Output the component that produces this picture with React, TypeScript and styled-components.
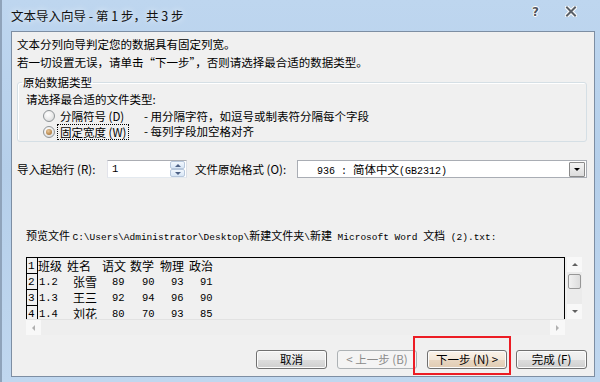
import React from "react";
import styled, { createGlobalStyle } from "styled-components";

const CJK = `"Noto Sans CJK SC", "Liberation Sans", sans-serif`;
const MONO = `"Liberation Mono", "Noto Sans CJK SC", monospace`;

const Global = createGlobalStyle`
  html, body { margin: 0; padding: 0; width: 600px; height: 382px; overflow: hidden; background: #b9d1ea; }
  body { font-family: ${CJK}; font-size: 11.5px; color: #000; }
  * { box-sizing: border-box; }
`;

const Window = styled.div`
  width: 600px;
  height: 382px;
  display: flex;
  flex-direction: column;
  padding: 0 5px 5px 9px;
  background: linear-gradient(180deg, #bed6ef 0%, #b5cfea 45%, #c0d7ef 100%);
  border-left: 2px solid #8fa3ba;
`;

const TitleBar = styled.div`
  height: 31px;
  flex: none;
  display: flex;
  align-items: center;
`;

const TitleText = styled.div`
  flex: 1;
  font-size: 12.5px;
  line-height: 16px;
  color: #111;
  text-shadow: 0 0 6px rgba(255, 255, 255, 0.9);
`;

const TitleButtons = styled.div`
  display: flex;
  align-items: center;
  gap: 26px;
  padding-right: 18px;
  padding-bottom: 8px;
`;

const HelpGlyph = styled.span`
  font-family: "DejaVu Sans", sans-serif;
  font-weight: bold;
  font-size: 12px;
  line-height: 12px;
  color: #50565e;
  text-shadow: 1px 0 #fff, -1px 0 #fff, 0 1px #fff, 0 -1px #fff;
`;

const Client = styled.div`
  flex: 1;
  background: #f0f0f0;
  border: 1px solid #7d8ea3;
  display: flex;
  flex-direction: column;
  padding: 0 7px 0 5px;
`;

const Intro = styled.div`
  margin-top: 3px;
  line-height: 18px;
`;

const Group = styled.fieldset`
  margin: 3px 0 0 0;
  padding: 0 0 2px 8px;
  border: 1px solid #d5dfe5;
  border-radius: 3px;
  min-width: 0;
  box-shadow: inset 1px 1px 0 #fff;
`;

const Legend = styled.legend`
  margin-left: -4px;
  padding: 0 1px;
  line-height: 16px;
`;

const Prompt = styled.div`
  margin-top: 1px;
  line-height: 17px;
`;

const RadioRow = styled.div<{ $h: number }>`
  display: grid;
  grid-template-columns: 12px 79px auto;
  column-gap: 5px;
  align-items: center;
  height: ${(p) => p.$h}px;
  padding-left: 17px;
`;

const RadioCircle = styled.span<{ $checked?: boolean }>`
  width: 12px;
  height: 12px;
  border-radius: 50%;
  border: 1px solid #8f9497;
  background: radial-gradient(circle at 40% 35%, #ffffff 0%, #eeeeee 45%, #cfd2d4 100%);
  display: flex;
  align-items: center;
  justify-content: center;
  &::after {
    content: "";
    display: ${(p) => (p.$checked ? "block" : "none")};
    width: 6px;
    height: 6px;
    border-radius: 50%;
    background: radial-gradient(circle at 40% 35%, #e9c89a 0%, #b98950 60%, #8d6738 100%);
  }
`;

const RadioLabel = styled.span<{ $focus?: boolean }>`
  justify-self: start;
  padding: 0 2px;
  margin-left: -2px;
  line-height: 14px;
  outline: ${(p) => (p.$focus ? "1px dotted #000" : "none")};
`;

const Desc = styled.span`
  line-height: 15px;
`;

const FieldRow = styled.div`
  margin-top: 18px;
  height: 18px;
  display: flex;
  align-items: center;
`;

const FieldLabel = styled.span<{ $w: number; $ml?: number }>`
  width: ${(p) => p.$w}px;
  margin-left: ${(p) => p.$ml || 0}px;
  flex: none;
`;

const SpinBox = styled.div`
  width: 80px;
  height: 18px;
  flex: none;
  border: 1px solid #abadb3;
  border-left-color: #e2e3ea;
  border-bottom-color: #e3e9ef;
  border-right-color: #dbdfe6;
  background: #fff;
  display: flex;
  align-items: center;
  padding: 0 1px 0 4px;
`;

const SpinValue = styled.span`
  flex: 1;
  font-family: ${MONO};
  font-size: 10.5px;
`;

const SpinButtons = styled.div`
  width: 15px;
  height: 16px;
  display: flex;
  flex-direction: column;
`;

const SpinBtn = styled.div`
  flex: 1;
  border: 1px solid #b7c7dc;
  border-radius: 2px;
  background: linear-gradient(180deg, #f2f7fd, #d8e6f6);
  display: flex;
  align-items: center;
  justify-content: center;
`;

const Combo = styled.div`
  flex: 1;
  height: 18px;
  border: 1px solid #a9adb4;
  background: #fff;
  display: flex;
  align-items: center;
  padding: 0 1px 0 19px;
`;

const ComboText = styled.span`
  flex: 1;
  font-size: 11.5px;
  white-space: pre;
`;

const Mono = styled.span<{ $size?: number }>`
  font-family: ${MONO};
  font-size: ${(p) => p.$size || 10}px;
`;

const DropBtn = styled.div`
  width: 16px;
  height: 15px;
  border: 1px solid #8a8a8a;
  border-radius: 1px;
  background: linear-gradient(180deg, #f4f4f4, #dcdcdc);
  display: flex;
  align-items: center;
  justify-content: center;
`;

const PreviewLabel = styled.div`
  margin-top: 49px;
  padding-left: 9px;
  line-height: 16px;
  font-size: 11px;
  white-space: pre;
`;

const PreviewGrid = styled.div`
  margin: 11px 0 0 9px;
  display: grid;
  grid-template-columns: 539px 2px 15px;
  grid-template-rows: 62px 16px;
`;

const PreviewBox = styled.div`
  grid-column: 1;
  grid-row: 1;
  border: 1px solid #000;
  border-bottom: none;
  background: #f0f0f0;
  overflow: hidden;
`;

const PRow = styled.div`
  display: flex;
  height: 16px;
  align-items: center;
  white-space: pre;
`;

const RowNum = styled.span`
  width: 11px;
  height: 16px;
  flex: none;
  border-right: 1px solid #000;
  border-bottom: 1px solid #000;
  font-family: ${MONO};
  font-size: 11px;
  line-height: 17px;
  padding-left: 1px;
`;

const Cell = styled.span<{ $w?: number; $mono?: boolean; $pl?: number }>`
  width: ${(p) => (p.$w ? `${p.$w}px` : "auto")};
  padding-left: ${(p) => p.$pl || 0}px;
  flex: none;
  font-family: ${(p) => (p.$mono ? MONO : CJK)};
  font-size: ${(p) => (p.$mono ? "10.5px" : "12px")};
  line-height: 16px;
`;

const VScroll = styled.div`
  grid-column: 3;
  grid-row: 1;
  background: #ebebeb;
  display: flex;
  flex-direction: column;
  align-items: center;
`;

const ArrowBox = styled.div<{ $h?: number }>`
  width: 15px;
  height: ${(p) => p.$h || 15}px;
  background: #f8f8f8;
  display: flex;
  align-items: center;
  justify-content: center;
  flex: none;
`;

const Thumb = styled.div`
  width: 13px;
  height: 15px;
  margin-top: 2px;
  border: 1px solid #979797;
  border-radius: 2px;
  background: linear-gradient(90deg, #f1f1f1, #dcdcdc);
`;

const Spacer = styled.div`
  flex: 1;
`;

const HScroll = styled.div`
  grid-column: 1;
  grid-row: 2;
  background: #eeeeee;
  border-top: 1px solid #e2e2e2;
  display: flex;
  align-items: stretch;
`;

const ButtonRow = styled.div`
  margin-top: 15px;
  display: flex;
  justify-content: flex-end;
`;

const Btn = styled.div<{ $w: number; $ml: number; $variant?: "disabled" | "hot" }>`
  position: relative;
  width: ${(p) => p.$w}px;
  margin-left: ${(p) => p.$ml}px;
  height: 19px;
  border: 1px solid ${(p) => (p.$variant === "disabled" ? "#adb2b5" : "#707070")};
  border-radius: 3px;
  box-shadow: inset 0 0 0 1px ${(p) => (p.$variant === "disabled" ? "#f4f4f4" : "#fcfcfc")};
  background: ${(p) =>
    p.$variant === "disabled"
      ? "#f4f4f4"
      : p.$variant === "hot"
      ? "linear-gradient(180deg, #faf3ea 0%, #f3e7d8 50%, #e9d7c2 51%, #e0ccb3 100%)"
      : "linear-gradient(180deg, #f2f2f2 0%, #ebebeb 50%, #dddddd 51%, #cfcfcf 100%)"};
  color: ${(p) => (p.$variant === "disabled" ? "#8a8a8a" : "#000")};
  display: flex;
  align-items: center;
  justify-content: center;
  line-height: 17px;
  white-space: pre;
`;

const Highlight = styled.div`
  position: relative;
  &::after {
    content: "";
    position: absolute;
    left: -4px;
    right: -4px;
    top: -14px;
    bottom: -6px;
    border: 2px solid #ec1c24;
    pointer-events: none;
  }
`;

const Tri = ({ dir, color = "#444", size = 4 }: { dir: "up" | "down" | "left" | "right"; color?: string; size?: number }) => {
  const s = size;
  const pts =
    dir === "up"
      ? `0,${s} ${s},0 ${2 * s},${s}`
      : dir === "down"
      ? `0,0 ${2 * s},0 ${s},${s}`
      : dir === "left"
      ? `${s},0 ${s},${2 * s} 0,${s}`
      : `0,0 0,${2 * s} ${s},${s}`;
  const w = dir === "up" || dir === "down" ? 2 * s : s;
  const h = dir === "up" || dir === "down" ? s : 2 * s;
  return (
    <svg width={w} height={h} viewBox={`0 0 ${w} ${h}`}>
      <polygon points={pts} fill={color} />
    </svg>
  );
};

const CloseGlyph = () => (
  <svg width="12" height="11" viewBox="0 0 12 11">
    <path d="M2 1.5 L10 9.5 M10 1.5 L2 9.5" stroke="#fff" strokeWidth="4" strokeLinecap="round" />
    <path d="M2 1.5 L10 9.5 M10 1.5 L2 9.5" stroke="#5a6068" strokeWidth="2" strokeLinecap="square" />
  </svg>
);

const header = [
  { t: "班级", w: 29 },
  { t: "姓名", w: 35 },
  { t: "语文", w: 28 },
  { t: "数学", w: 30 },
  { t: "物理", w: 29 },
  { t: "政治" },
];

const rows = [
  ["1.2", "张雪", "89", "90", "93", "91"],
  ["1.3", "王三", "92", "94", "96", "90"],
  ["1.4", "刘花", "80", "70", "93", "85"],
];
const dataW = [35, 39, 30, 29, 29, undefined];

export default function App() {
  return (
    <>
      <Global />
      <Window>
        <TitleBar>
          <TitleText>文本导入向导 - 第 1 步，共 3 步</TitleText>
          <TitleButtons>
            <HelpGlyph>?</HelpGlyph>
            <CloseGlyph />
          </TitleButtons>
        </TitleBar>
        <Client>
          <Intro>
            <div>文本分列向导判定您的数据具有固定列宽。</div>
            <div>若一切设置无误，请单击“下一步”，否则请选择最合适的数据类型。</div>
          </Intro>
          <Group>
            <Legend>原始数据类型</Legend>
            <Prompt>请选择最合适的文件类型:</Prompt>
            <RadioRow $h={16}>
              <RadioCircle />
              <RadioLabel>分隔符号 (D)</RadioLabel>
              <Desc>- 用分隔字符，如逗号或制表符分隔每个字段</Desc>
            </RadioRow>
            <RadioRow $h={15}>
              <RadioCircle $checked />
              <RadioLabel $focus>固定宽度 (W)</RadioLabel>
              <Desc>- 每列字段加空格对齐</Desc>
            </RadioRow>
          </Group>
          <FieldRow>
            <FieldLabel $w={90}>导入起始行 (R):</FieldLabel>
            <SpinBox>
              <SpinValue>1</SpinValue>
              <SpinButtons>
                <SpinBtn>
                  <Tri dir="up" color="#4d6185" size={3} />
                </SpinBtn>
                <SpinBtn>
                  <Tri dir="down" color="#4d6185" size={3} />
                </SpinBtn>
              </SpinButtons>
            </SpinBox>
            <FieldLabel $w={102} $ml={8}>文件原始格式 (O):</FieldLabel>
            <Combo>
              <ComboText>
                <Mono>936 : </Mono>简体中文<Mono>(GB2312)</Mono>
              </ComboText>
              <DropBtn>
                <Tri dir="down" color="#000" size={3} />
              </DropBtn>
            </Combo>
          </FieldRow>
          <PreviewLabel>
            预览文件 <Mono $size={9.5}>C:\Users\Administrator\Desktop\</Mono>新建文件夹<Mono $size={9.5}>\</Mono>新建<Mono $size={9.5}> Microsoft Word </Mono>文档<Mono $size={9.5}> (2).txt:</Mono>
          </PreviewLabel>
          <PreviewGrid>
            <PreviewBox>
              <PRow>
                <RowNum>1</RowNum>
                {header.map((h) => (
                  <Cell key={h.t} $w={h.w}>
                    {h.t}
                  </Cell>
                ))}
              </PRow>
              {rows.map((r, i) => (
                <PRow key={i}>
                  <RowNum>{i + 2}</RowNum>
                  {r.map((c, j) => (
                    <Cell key={j} $w={dataW[j]} $mono={j !== 1} $pl={j === 0 ? 1 : 0}>
                      {c}
                    </Cell>
                  ))}
                </PRow>
              ))}
            </PreviewBox>
            <VScroll>
              <ArrowBox $h={15}>
                <Tri dir="up" color="#606060" size={3} />
              </ArrowBox>
              <Thumb />
              <Spacer />
              <ArrowBox $h={15}>
                <Tri dir="down" color="#606060" size={3} />
              </ArrowBox>
            </VScroll>
            <HScroll>
              <ArrowBox $h={15}>
                <Tri dir="left" color="#b0b0b0" size={3} />
              </ArrowBox>
              <Spacer />
              <ArrowBox $h={15}>
                <Tri dir="right" color="#b0b0b0" size={3} />
              </ArrowBox>
            </HScroll>
          </PreviewGrid>
          <ButtonRow>
            <Btn $w={71} $ml={0}>取消</Btn>
            <Btn $w={80} $ml={10} $variant="disabled">{"< 上一步 (B)"}</Btn>
            <Highlight>
              <Btn $w={80} $ml={10} $variant="hot">{"下一步 (N) >"}</Btn>
            </Highlight>
            <Btn $w={71} $ml={9}>完成 (F)</Btn>
          </ButtonRow>
        </Client>
      </Window>
    </>
  );
}
